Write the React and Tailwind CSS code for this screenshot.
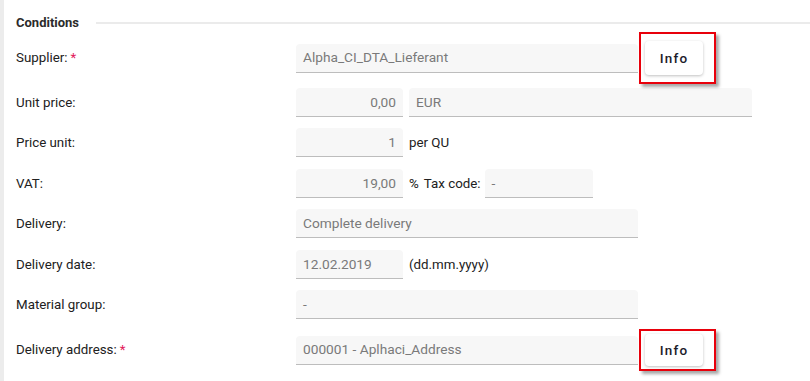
const field = "h-[29px] bg-[#f7f7f7] border-b border-[#bdbdbd] rounded-t-[4px] flex items-center px-[7px] text-[13.7px] text-[#7a7a7a]";
const plain = "text-[13.33px] text-[#212121]";

function Label({ text, required }) {
  return (
    <div className={`w-[280px] shrink-0 ${plain}`}>
      {text}
      {required && <span className="text-[#e2195b] ml-[3px]">*</span>}
    </div>
  );
}

function InfoButton({ small }) {
  return (
    <div className="relative ml-[7px]">
      <button
        className={`w-[58px] ${small ? "h-[32px]" : "h-[34px]"} bg-white rounded-[4px] shadow-[0_1px_3px_rgba(0,0,0,0.25)] text-[13.5px] font-medium tracking-[1.2px] text-[#1c1c2a]`}
      >
        Info
      </button>
      {/* annotation box drawn over the button */}
      <div
        className={`absolute left-[-6px] w-[77px] border-2 border-[#e8000b] shadow-[3px_3px_3px_rgba(0,0,0,0.35)] pointer-events-none ${small ? "top-[-5px] h-[42px]" : "top-[-9px] h-[52px]"}`}
      />
    </div>
  );
}

export default function App() {
  return (
    <div
      className="flex w-[810px] h-[381px] bg-white overflow-hidden"
      style={{ fontFamily: "Roboto, 'Liberation Sans', sans-serif" }}
    >
      <div className="w-[4px] shrink-0 bg-[#ececec]" />
      <div className="flex-1 pl-[12px] flex flex-col">
        <div className="flex items-center h-[20px] mt-[13px]">
          <div className="text-[13px] font-bold text-[#2b2b2b] w-[80px]">Conditions</div>
          <div className="flex-1 h-[2px] bg-[#ebebeb]" />
        </div>

        <div className="flex items-center h-[34px] mt-[8px]">
          <Label text="Supplier:" required />
          <div className={`${field} w-[342px]`}>Alpha_CI_DTA_Lieferant</div>
          <InfoButton />
        </div>

        <div className="flex items-center h-[29px] mt-[13px]">
          <Label text="Unit price:" />
          <div className={`${field} w-[107px] justify-end`}>0,00</div>
          <div className={`${field} w-[343px] ml-[6px]`}>EUR</div>
        </div>

        <div className="flex items-center h-[29px] mt-[11px]">
          <Label text="Price unit:" />
          <div className={`${field} w-[107px] justify-end`}>1</div>
          <div className={`ml-[6px] ${plain}`}>per QU</div>
        </div>

        <div className="flex items-center h-[29px] mt-[12px]">
          <Label text="VAT:" />
          <div className={`${field} w-[107px] justify-end`}>19,00</div>
          <div className={`ml-[6px] ${plain}`}>%</div>
          <div className={`ml-[5px] ${plain}`}>Tax code:</div>
          <div className={`${field} w-[108px] ml-[4px]`}>-</div>
        </div>

        <div className="flex items-center h-[29px] mt-[11px]">
          <Label text="Delivery:" />
          <div className={`${field} w-[342px]`}>Complete delivery</div>
        </div>

        <div className="flex items-center h-[29px] mt-[12px]">
          <Label text="Delivery date:" />
          <div className={`${field} w-[107px]`}>12.02.2019</div>
          <div className={`ml-[6px] ${plain}`}>(dd.mm.yyyy)</div>
        </div>

        <div className="flex items-center h-[29px] mt-[11px]">
          <Label text="Material group:" />
          <div className={`${field} w-[342px]`}>-</div>
        </div>

        <div className="flex items-center h-[32px] mt-[15px]">
          <Label text="Delivery address:" required />
          <div className={`${field} w-[342px]`}>000001 - Aplhaci_Address</div>
          <InfoButton small />
        </div>
      </div>
    </div>
  );
}
